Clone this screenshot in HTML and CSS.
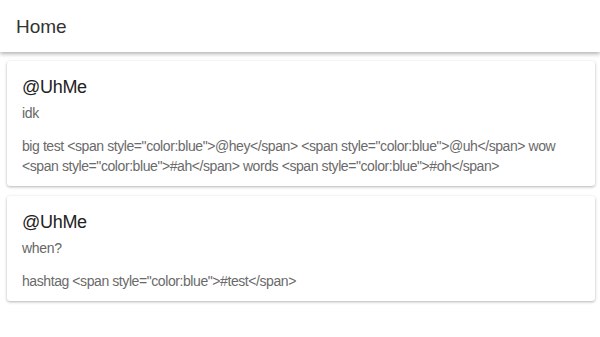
FILE: index.html
```html
<!DOCTYPE html>
<html lang="en">
<head>
    <meta charset="UTF-8">
    <meta name="viewport" content="width=device-width, initial-scale=1.0">
    <title>Home</title>
    <link rel="stylesheet" href="styles.css">
</head>
<body>
    <div class="header">
        <div class="title">Home</div>
    </div>

    <div class="content">
        <div class="card">
            <div class="card-title">@UhMe</div>
            <div class="card-subtitle">idk</div>
            <div class="card-text">big test &lt;span style="color:blue"&gt;@hey&lt;/span&gt; &lt;span style="color:blue"&gt;@uh&lt;/span&gt; wow &lt;span style="color:blue"&gt;#ah&lt;/span&gt; words &lt;span style="color:blue"&gt;#oh&lt;/span&gt;</div>
        </div>
        <div class="card">
            <div class="card-title">@UhMe</div>
            <div class="card-subtitle">when?</div>
            <div class="card-text">hashtag &lt;span style="color:blue"&gt;#test&lt;/span&gt;</div>
        </div>
    </div>
</body>
</html>
```

FILE: styles.css
```css
body {
    margin: 0;
    font-family: "Liberation Sans", Arial, sans-serif;
    background: #fff;
}
.header {
    height: 52px;
    display: flex;
    align-items: center;
    padding: 2px 16px 0;
    box-sizing: border-box;
    box-shadow: 0 2px 4px rgba(0, 0, 0, 0.3);
    position: relative;
}
.title {
    font-size: 19px;
    color: #333;
}
.content {
    padding: 9px 5px 0 7px;
}
.card {
    margin-bottom: 10px;
    padding: 14px 15px 10px;
    border-radius: 3px;
    box-shadow: 0 1px 3px rgba(0, 0, 0, 0.3);
}
.card-title {
    font-size: 18px;
    line-height: 24px;
    letter-spacing: -0.3px;
    color: #222;
}
.card-subtitle {
    margin-top: 4px;
    font-size: 14px;
    line-height: 20px;
    letter-spacing: -0.3px;
    color: #666;
}
.card-text {
    margin-top: 13px;
    font-size: 14px;
    line-height: 20px;
    letter-spacing: -0.42px;
    color: #6a6a6a;
}
```
